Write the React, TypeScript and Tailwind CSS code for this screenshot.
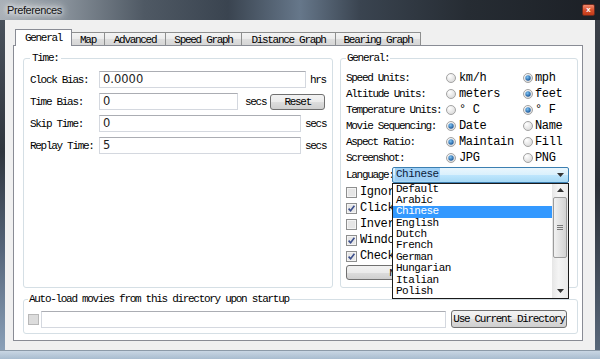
import React from "react";

// Win7-style "Preferences" dialog (SimSun-like text approximated with Liberation Mono)
const SM = "text-[11px] leading-[12px] tracking-[-1.3px]";
const MD = "text-[12px] leading-[14px] tracking-[-0.35px]";
const LS = "text-[11px] leading-[11.4px] tracking-[-0.5px]";

const TABS = [
  { label: "General", cls: "w-[57px]", active: true },
  { label: "Map", cls: "w-[34px]" },
  { label: "Advanced", cls: "w-[62px]" },
  { label: "Speed Graph", cls: "w-[77px]" },
  { label: "Distance Graph", cls: "w-[95px]" },
  { label: "Bearing Graph", cls: "w-[86px]" },
];

const LANGS = ["Default", "Arabic", "Chinese", "English", "Dutch", "French", "German", "Hungarian", "Italian", "Polish"];

function Radio({ on }: { on?: boolean }) {
  return (
    <svg width="10" height="10" viewBox="0 0 10 10" className="shrink-0">
      <defs>
        <radialGradient id="rOff" cx="35%" cy="30%" r="80%">
          <stop offset="0" stopColor="#ffffff" />
          <stop offset="1" stopColor="#d6d6d6" />
        </radialGradient>
        <radialGradient id="rDot" cx="40%" cy="35%" r="70%">
          <stop offset="0" stopColor="#7fc4f4" />
          <stop offset="1" stopColor="#124f93" />
        </radialGradient>
      </defs>
      <circle cx="5" cy="5" r="4.5" fill="url(#rOff)" stroke="#a3a3a3" strokeWidth="1" />
      {on && <circle cx="5" cy="5" r="2.7" fill="url(#rDot)" />}
    </svg>
  );
}

function Check({ on, disabled }: { on?: boolean; disabled?: boolean }) {
  return (
    <svg width="11" height="11" viewBox="0 0 11 11" className="shrink-0">
      <rect
        x="0.5"
        y="0.5"
        width="10"
        height="10"
        fill={disabled ? "#dcdcdc" : "#f4f4f4"}
        stroke={disabled ? "#b8b8b8" : "#8e8f8f"}
      />
      {!disabled && <rect x="2" y="2" width="7" height="7" fill="#e6e6e6" />}
      {on && <path d="M2.6 5.6 L4.6 7.8 L8.4 2.8" fill="none" stroke="#3c4f8c" strokeWidth="1.6" />}
    </svg>
  );
}

function TextBox({ w, value }: { w: string; value?: string }) {
  return (
    <div
      className={`${w} h-[17px] shrink-0 border border-[#d4d8df] border-t-[#abadb3] bg-white pl-[3px] font-['DejaVu_Sans',sans-serif] text-[11.5px] leading-[15px] text-[#222]`}
    >
      {value}
    </div>
  );
}

function Btn({ className, children }: { className: string; children: React.ReactNode }) {
  return (
    <div
      className={`${className} flex shrink-0 items-center justify-center overflow-hidden whitespace-nowrap rounded-[3px] border border-[#707070] bg-[linear-gradient(#f2f2f2_0%,#ebebeb_50%,#dddddd_51%,#cfcfcf_100%)] ${SM}`}
    >
      {children}
    </div>
  );
}

function Arrow({ up }: { up?: boolean }) {
  return (
    <svg width="7" height="4" viewBox="0 0 7 4">
      <path d={up ? "M0 4 L3.5 0 L7 4 Z" : "M0 0 L7 0 L3.5 4 Z"} fill="#333" />
    </svg>
  );
}

function RadioRow({ label, a, b, first }: { label: string; a: string; b: string; first: boolean }) {
  return (
    <div className="flex h-[16px] items-center">
      <span className={`w-[100px] shrink-0 whitespace-nowrap ${SM}`}>{label}</span>
      <div className="flex w-[77px] items-center gap-[3px]">
        <Radio on={first} />
        <span className={MD}>{a}</span>
      </div>
      <div className="flex items-center gap-[2px]">
        <Radio on={!first} />
        <span className={MD}>{b}</span>
      </div>
    </div>
  );
}

// the open language list covers these labels, so only the visible part is kept
function CheckRow({ label, on }: { label: string; on?: boolean }) {
  return (
    <div className="flex h-[16px] items-center gap-[3px] whitespace-nowrap">
      <Check on={on} />
      <span className={`w-[32px] overflow-hidden ${MD}`}>{label}</span>
    </div>
  );
}

export default function App() {
  return (
    <div className="flex h-[359px] w-[600px] flex-col overflow-hidden bg-[#2a3038] font-['Liberation_Mono',monospace] text-black">
      {/* title bar */}
      <div className="flex h-[20px] shrink-0 items-center justify-between bg-[linear-gradient(90deg,#aab1b8_0%,#8b949d_10%,#4f5964_24%,#3a4450_38%,#66778a_50%,#3a4450_60%,#262c33_78%,#1c2026_100%)]">
        <span className="ml-[7px] font-['Liberation_Sans',sans-serif] text-[11px] tracking-[-0.4px] text-[#141414] [text-shadow:0_0_5px_#fff,0_0_8px_#fff,0_0_10px_#e6e6e6]">
          Preferences
        </span>
        <div className="mr-[5px] flex h-[12px] w-[13px] items-center justify-center rounded-[2px] border border-[#6b2b20] bg-[linear-gradient(#f08a6e_0%,#d9512e_50%,#c23a17_100%)]">
          <span className="font-['Liberation_Sans',sans-serif] text-[8px] font-bold leading-none text-white">x</span>
        </div>
      </div>

      <div className="flex min-h-0 flex-1">
        <div className="w-[5px] shrink-0 bg-[linear-gradient(#4a525c,#2f353d_40%,#55657a_70%,#8aa0b8)]" />

        {/* client area */}
        <div className="flex min-w-0 flex-1 flex-col bg-[#f0f0f0] pl-[8px] pt-[9px]">
          <div className="flex h-[16px] items-end pl-[2px]">
            {TABS.map((t) =>
              t.active ? (
                <div
                  key={t.label}
                  className={`${t.cls} relative z-10 -mb-px flex h-[17px] items-center justify-center border border-b-0 border-[#898c95] bg-white ${SM}`}
                >
                  {t.label}
                </div>
              ) : (
                <div
                  key={t.label}
                  className={`${t.cls} -ml-px flex h-[13px] items-center justify-center border border-b-0 border-[#8e8f8f] bg-[linear-gradient(#f4f4f4_0%,#ebebeb_50%,#dedede_51%,#d6d6d6_100%)] pt-px ${SM}`}
                >
                  {t.label}
                </div>
              )
            )}
          </div>

          {/* tab pane */}
          <div className="flex h-[296px] w-[570px] flex-col gap-[5px] border border-[#898c95] bg-white pl-[9px] pt-[6px]">
            <div className="flex gap-[7px]">
              <fieldset className="h-[236px] w-[310px] rounded-[3px] border border-[#d5dfe5] pl-[6px] pt-[7px]">
                <legend className={`px-[2px] ${SM}`}>Time:</legend>
                <div className="flex flex-col gap-[5px]">
                  <div className="flex h-[17px] items-center">
                    <span className={`w-[69px] shrink-0 ${SM}`}>Clock Bias:</span>
                    <TextBox w="w-[207px]" value="0.0000" />
                    <span className={`ml-[4px] ${SM}`}>hrs</span>
                  </div>
                  <div className="flex h-[17px] items-center">
                    <span className={`w-[69px] shrink-0 ${SM}`}>Time Bias:</span>
                    <TextBox w="w-[139px]" value="0" />
                    <span className={`ml-[7px] ${SM}`}>secs</span>
                    <Btn className="ml-[4px] h-[16px] w-[55px]">Reset</Btn>
                  </div>
                  <div className="flex h-[17px] items-center">
                    <span className={`w-[69px] shrink-0 ${SM}`}>Skip Time:</span>
                    <TextBox w="w-[202px]" value="0" />
                    <span className={`ml-[4px] ${SM}`}>secs</span>
                  </div>
                  <div className="flex h-[17px] items-center">
                    <span className={`w-[69px] shrink-0 whitespace-nowrap ${SM}`}>Replay Time:</span>
                    <TextBox w="w-[202px]" value="5" />
                    <span className={`ml-[4px] ${SM}`}>secs</span>
                  </div>
                </div>
              </fieldset>

              <fieldset className="h-[236px] w-[238px] rounded-[3px] border border-[#d5dfe5] pl-[5px] pt-[6px]">
                <legend className={`px-[1px] ${SM}`}>General:</legend>
                <RadioRow label="Speed Units:" a="km/h" b="mph" first={false} />
                <RadioRow label="Altitude Units:" a="meters" b="feet" first={false} />
                <RadioRow label="Temperature Units:" a="° C" b="° F" first={false} />
                <RadioRow label="Movie Sequencing:" a="Date" b="Name" first />
                <RadioRow label="Aspect Ratio:" a="Maintain" b="Fill" first />
                <RadioRow label="Screenshot:" a="JPG" b="PNG" first />

                <div className="flex h-[17px] items-center">
                  <span className={`w-[46px] shrink-0 whitespace-nowrap ${SM}`}>Language:</span>
                  <div className="relative">
                    <div className="flex h-[16px] w-[177px] items-center justify-between rounded-[2px] border border-[#3c7fb1] bg-[linear-gradient(#eaf6fd_0%,#d9f0fc_50%,#bee6fd_51%,#a7d9f5_100%)] pl-[2px] pr-[4px]">
                      <span className={`bg-[#9fd0f6] px-px ${LS} leading-[13px] text-[#0b1b3a]`}>Chinese</span>
                      <Arrow />
                    </div>
                    {/* open dropdown list */}
                    <div className="absolute left-0 top-[16px] z-20 flex h-[116px] w-[177px] border border-[#1a1a1a] bg-white">
                      <div className="flex w-[159px] flex-col">
                        {LANGS.map((l) => (
                          <div
                            key={l}
                            className={`h-[11.4px] pl-[3px] ${LS} ${l === "Chinese" ? "bg-[#3399ff] text-white" : "text-black"}`}
                          >
                            {l}
                          </div>
                        ))}
                      </div>
                      <div className="flex w-[16px] flex-col bg-[linear-gradient(90deg,#e6e6e6,#f4f4f4_40%,#e9e9e9)]">
                        <div className="flex h-[13px] items-center justify-center">
                          <Arrow up />
                        </div>
                        <div className="mx-[1px] flex h-[61px] items-center justify-center rounded-[2px] border border-[#9b9b9b] bg-[linear-gradient(90deg,#f1f1f1,#e2e2e2_50%,#d3d3d3)]">
                          <div className="flex flex-col gap-[1px]">
                            <div className="h-px w-[6px] bg-[#777]" />
                            <div className="h-px w-[6px] bg-[#777]" />
                            <div className="h-px w-[6px] bg-[#777]" />
                          </div>
                        </div>
                        <div className="flex-1" />
                        <div className="flex h-[13px] items-center justify-center">
                          <Arrow />
                        </div>
                      </div>
                    </div>
                  </div>
                </div>

                <div className="mt-[1px] flex flex-col">
                  <CheckRow label="Ignore GPS time" />
                  <CheckRow label="Click map to seek" on />
                  <CheckRow label="Invert colors" />
                  <CheckRow label="Window always on top" on />
                  <CheckRow label="Check for updates" on />
                </div>
                <div className="mt-[1px] w-[47px] overflow-hidden">
                  <Btn className="h-[15px] w-[223px] pr-[4px]">Network Proxy Settings...</Btn>
                </div>
              </fieldset>
            </div>

            <fieldset className="h-[41px] w-[555px] rounded-[3px] border border-[#d5dfe5] pl-[4px] pt-[5px]">
              <legend className={`px-[1px] ${SM}`}>Auto-load movies from this directory upon startup</legend>
              <div className="flex items-center">
                <Check disabled />
                <TextBox w="ml-[2px] w-[405px]" />
                <Btn className="ml-[5px] h-[18px] w-[116px]">Use Current Directory</Btn>
              </div>
            </fieldset>
          </div>
        </div>

        <div className="w-[5px] shrink-0 bg-[linear-gradient(#3a4048,#2b3037_50%,#59687a)]" />
      </div>

      <div className="h-[9px] shrink-0 border-t border-[#8c9aa8] bg-[linear-gradient(#c9d6e3,#a8bccf)]" />
    </div>
  );
}
